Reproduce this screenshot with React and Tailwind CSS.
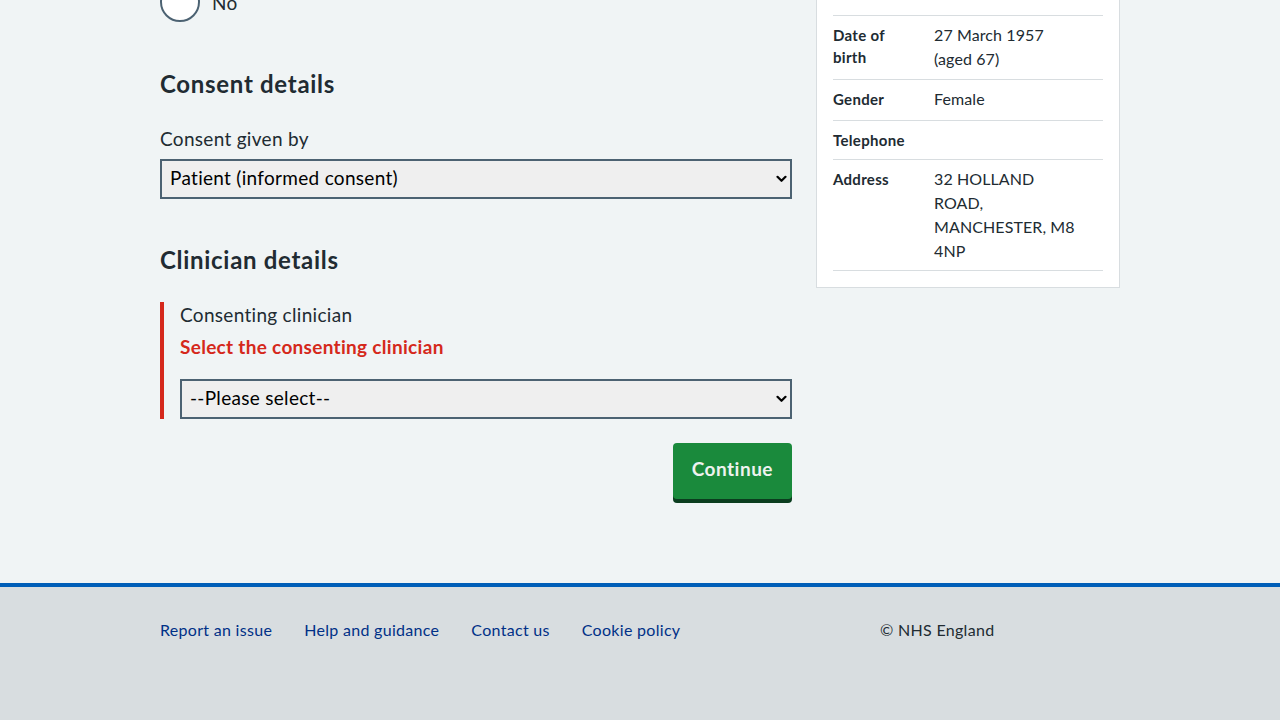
import React from "react";

const font = { fontFamily: "Lato, 'Noto Sans', sans-serif", letterSpacing: "0.3px" };

function Chevron() {
  return (
    <svg className="pointer-events-none absolute right-[5px] top-1/2 -translate-y-1/2" width="11" height="8" viewBox="0 0 11 8">
      <path d="M1.5 1.8 L5.5 5.8 L9.5 1.8" fill="none" stroke="#000" strokeWidth="2.2" strokeLinecap="round" strokeLinejoin="round" />
    </svg>
  );
}

function Select({ value }) {
  return (
    <div className="relative">
      <select
        defaultValue={value}
        className="block h-[40px] w-full appearance-none border-2 border-[#4c6272] bg-[#efefef] pl-[8px] pb-[3px] text-[19px] leading-[24px] text-black outline-none"
        style={font}
      >
        <option>{value}</option>
      </select>
      <Chevron />
    </div>
  );
}

function Row({ k, v, pad = "pt-[8px] pb-[8px]" }) {
  return (
    <div className={"flex border-b border-[#d8dde0] " + pad}>
      <div className="w-[101px] shrink-0 pr-[8px] text-[15px] font-bold leading-[22px] text-[#212b32]">{k}</div>
      <div className="relative -top-[1px] whitespace-nowrap text-[16px] leading-[24px] tracking-[0.1px] text-[#212b32]">{v}</div>
    </div>
  );
}

export default function App() {
  return (
    <div className="min-h-[720px] bg-[#f0f4f5] flex flex-col" style={font}>
      <main className="mx-auto flex w-[960px] gap-[24px] h-[583px] overflow-hidden">
        <div className="w-[632px] shrink-0 -mt-[18px]">
          <div className="flex items-center">
            <span className="h-[40px] w-[40px] rounded-full border-2 border-[#4c6272] bg-white" />
            <span className="ml-[12px] mt-[2px] text-[19px] leading-[28px] text-[#212b32]">No</span>
          </div>

          <h2 className="mt-[46px] text-[24px] font-bold leading-[32px] tracking-[0.7px] text-[#212b32]">Consent details</h2>
          <label className="mt-[25px] block text-[19px] leading-[28px] text-[#212b32]">Consent given by</label>
          <div className="mt-[6px]">
            <Select value="Patient (informed consent)" />
          </div>

          <h2 className="mt-[45px] text-[24px] font-bold leading-[32px] tracking-[0.7px] text-[#212b32]">Clinician details</h2>

          <div className="mt-[27px] border-l-4 border-[#d5281b] pl-[16px]">
            <label className="block -mt-[1px] text-[19px] leading-[26px] text-[#212b32]">Consenting clinician</label>
            <p className="mt-[5px] text-[19px] font-bold leading-[28px] text-[#d5281b]">Select the consenting clinician</p>
            <div className="mt-[18px]">
              <Select value="--Please select--" />
            </div>
          </div>

          <div className="mt-[24px] flex justify-end">
            <button className="h-[56px] rounded-[4px] bg-[#1a8a3c] px-[19px] pb-[3px] text-[19px] font-bold text-[#eef2ef] shadow-[0_4px_0_#0b3d1f]" style={{ letterSpacing: "0.5px" }}>
              Continue
            </button>
          </div>
        </div>

        <div className="w-[304px] shrink-0 self-start">
          <div className="border border-[#d8dde0] bg-white px-[16px] pb-[16px] -mt-[40px] pt-[16px]">
            <div className="h-[39px] border-b border-[#d8dde0]" />
            <Row k={<>Date of<br />birth</>} v={<>27 March 1957<br />(aged 67)</>} pad="pt-[8px] pb-[7px]" />
            <Row k="Gender" v="Female" />
            <Row k="Telephone" v="" />
            <Row
              k="Address"
              v={<>32 HOLLAND<br />ROAD,<br />MANCHESTER, M8<br />4NP</>}
              pad="pt-[8px] pb-[6px]"
            />
          </div>
        </div>
      </main>

      <footer className="flex-1 border-t-4 border-[#005eb8] bg-[#d8dde0] min-h-[133px]">
        <div className="mx-auto flex w-[960px] pt-[31px]">
          <ul className="flex w-[720px] gap-[32px] text-[16px] leading-[24px] text-[#003087]">
            <li>Report an issue</li>
            <li>Help and guidance</li>
            <li>Contact us</li>
            <li>Cookie policy</li>
          </ul>
          <p className="text-[16px] leading-[24px] text-[#212b32]">© NHS England</p>
        </div>
      </footer>
    </div>
  );
}
